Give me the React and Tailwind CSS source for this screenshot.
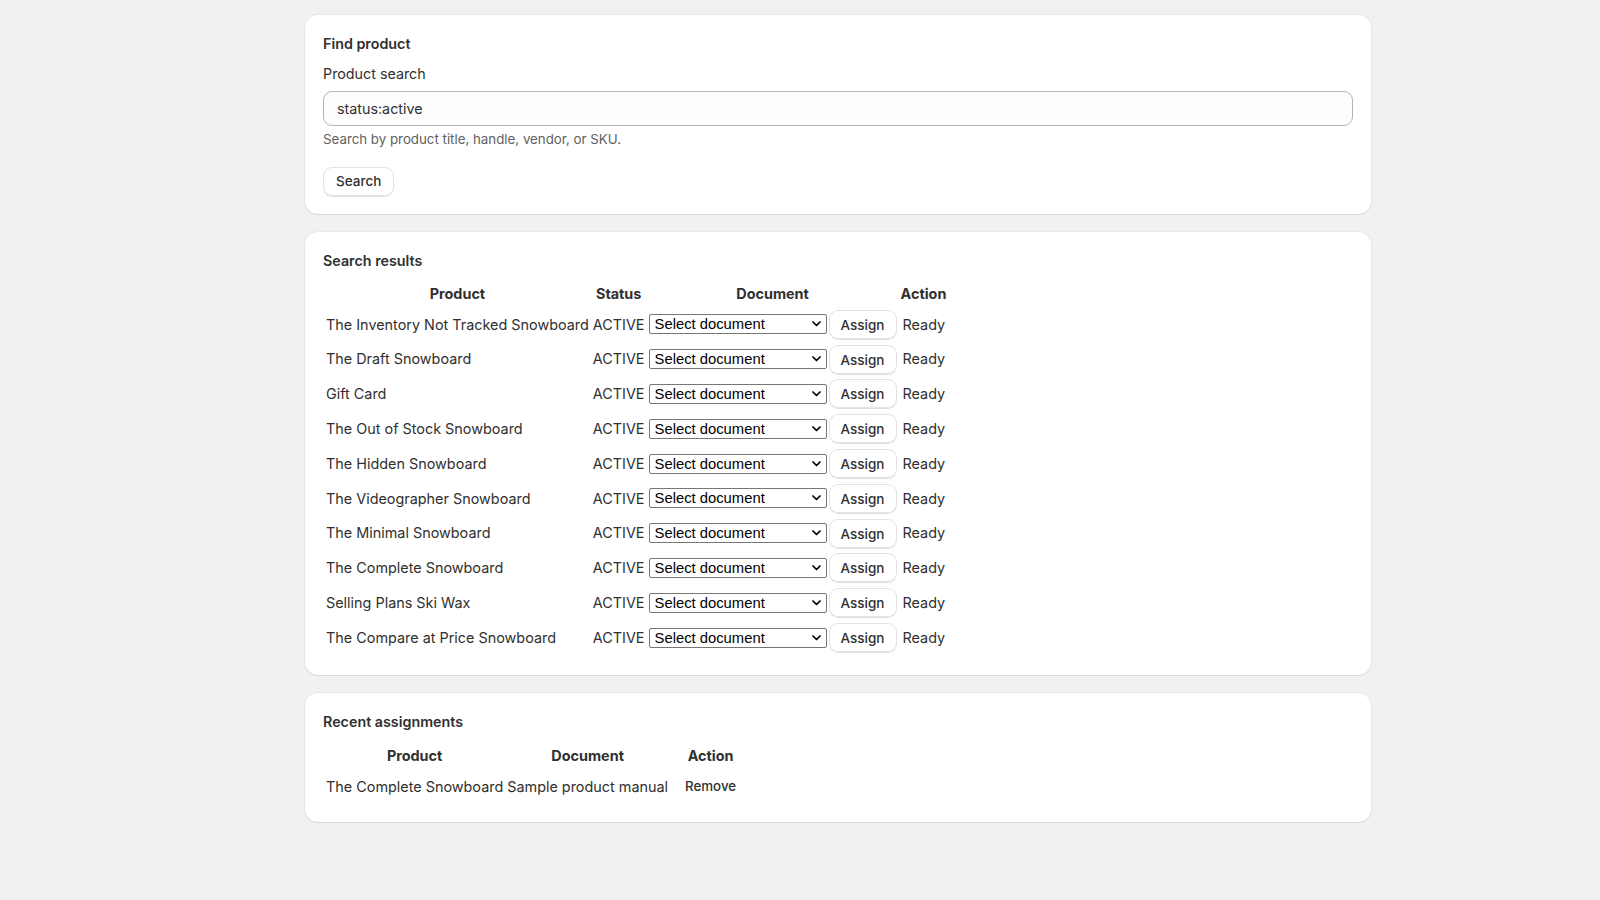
import { useState } from 'react';

const PRODUCTS = [
  'The Inventory Not Tracked Snowboard',
  'The Draft Snowboard',
  'Gift Card',
  'The Out of Stock Snowboard',
  'The Hidden Snowboard',
  'The Videographer Snowboard',
  'The Minimal Snowboard',
  'The Complete Snowboard',
  'Selling Plans Ski Wax',
  'The Compare at Price Snowboard',
];

const RECENT = [{ product: 'The Complete Snowboard', document: 'Sample product manual' }];

const font = { fontFamily: 'Inter, "Noto Sans", sans-serif' };

function Card({ title, children, className = 'pb-[18px]' }) {
  return (
    <div
      className={
        'rounded-[13px] bg-white px-[18px] pt-[19px] shadow-[0_1px_0_0_rgba(26,26,26,0.08),0_0_0_1px_rgba(0,0,0,0.035)] ' +
        className
      }
    >
      <h2 className="h-[20px] text-[14.3px] font-semibold leading-[20px] text-[#303030]">{title}</h2>
      {children}
    </div>
  );
}

function Boton({ children, className = '' }) {
  return (
    <button
      className={
        'rounded-[9px] bg-white text-[13.5px] font-medium text-[#303030] shadow-[0_1px_0_0_rgba(0,0,0,0.12),inset_0_0_0_1px_#e3e3e3] ' +
        className
      }
    >
      {children}
    </button>
  );
}

function DocumentSelect() {
  return (
    <div className="relative h-[20px] w-[178px]">
      <select
        className="block h-[20px] w-[178px] appearance-none rounded-[2px] border border-[#767676] bg-white py-0 pl-[5px] text-[14.8px] leading-[16px] text-black outline-none"
        style={{ fontFamily: '"Liberation Sans", Arial, sans-serif' }}
        defaultValue=""
      >
        <option value="">Select document</option>
        <option value="manual">Sample product manual</option>
      </select>
      <svg
        className="pointer-events-none absolute right-[6px] top-[7px]"
        width="9"
        height="6"
        viewBox="0 0 9 6"
        fill="none"
      >
        <path d="M1 1L4.5 4.5L8 1" stroke="#000" strokeWidth="1.7" strokeLinecap="round" strokeLinejoin="round" />
      </svg>
    </div>
  );
}

export default function App() {
  const [query, setQuery] = useState('status:active');

  return (
    <div className="min-h-screen bg-[#f1f1f1] pt-[15px] pb-[40px] text-[#303030]" style={font}>
      <div className="ml-[305px] flex w-[1066px] flex-col gap-[18px]">
        <Card title="Find product">
          <label className="mt-[10px] block h-[20px] text-[14.3px] leading-[20px]">Product search</label>
          <input
            value={query}
            onChange={(e) => setQuery(e.target.value)}
            className="mt-[7px] block h-[35px] w-full rounded-[9px] border border-[#b5b5b5] bg-[#fdfdfd] px-[13px] text-[14.3px] text-[#303030] outline-none"
          />
          <p className="mt-[3px] h-[20px] text-[13.3px] leading-[20px] text-[#616161]">
            Search by product title, handle, vendor, or SKU.
          </p>
          <Boton className="mt-[18px] h-[29px] px-[13px]">Search</Boton>
        </Card>

        <Card title="Search results" className="pb-[19px]">
          <table className="mt-[9px] border-separate border-spacing-[2px] text-[14.4px]">
            <thead>
              <tr className="h-[24px]">
                <th className="p-[1px] font-bold">Product</th>
                <th className="p-[1px] font-bold">Status</th>
                <th className="p-[1px] font-bold">Document</th>
                <th className="p-[1px] font-bold">Action</th>
              </tr>
            </thead>
            <tbody>
              {PRODUCTS.map((p) => (
                <tr key={p} className="h-[32.8px]">
                  <td className="p-[1px] whitespace-nowrap">{p}</td>
                  <td className="p-[1px]">ACTIVE</td>
                  <td className="p-[1px]">
                    <div className="flex items-center gap-[2px]">
                      <DocumentSelect />
                      <Boton className="h-[29px] w-[68px] pt-[1px]">Assign</Boton>
                    </div>
                  </td>
                  <td className="p-[1px] pl-[3px]">Ready</td>
                </tr>
              ))}
            </tbody>
          </table>
        </Card>

        <Card title="Recent assignments" className="pb-[17px]">
          <table className="mt-[10px] border-separate border-spacing-[2px] text-[14.4px]">
            <thead>
              <tr className="h-[24px]">
                <th className="p-[1px] font-bold">Product</th>
                <th className="p-[1px] font-bold">Document</th>
                <th className="p-[1px] font-bold">Action</th>
              </tr>
            </thead>
            <tbody>
              {RECENT.map((r) => (
                <tr key={r.product} className="h-[33px]">
                  <td className="p-[1px] whitespace-nowrap">{r.product}</td>
                  <td className="p-[1px] whitespace-nowrap">{r.document}</td>
                  <td className="p-[1px]">
                    <button className="h-[29px] rounded-[9px] px-[13px] pt-[1px] text-[13.3px] font-medium text-[#303030]">
                      Remove
                    </button>
                  </td>
                </tr>
              ))}
            </tbody>
          </table>
        </Card>
      </div>
    </div>
  );
}
